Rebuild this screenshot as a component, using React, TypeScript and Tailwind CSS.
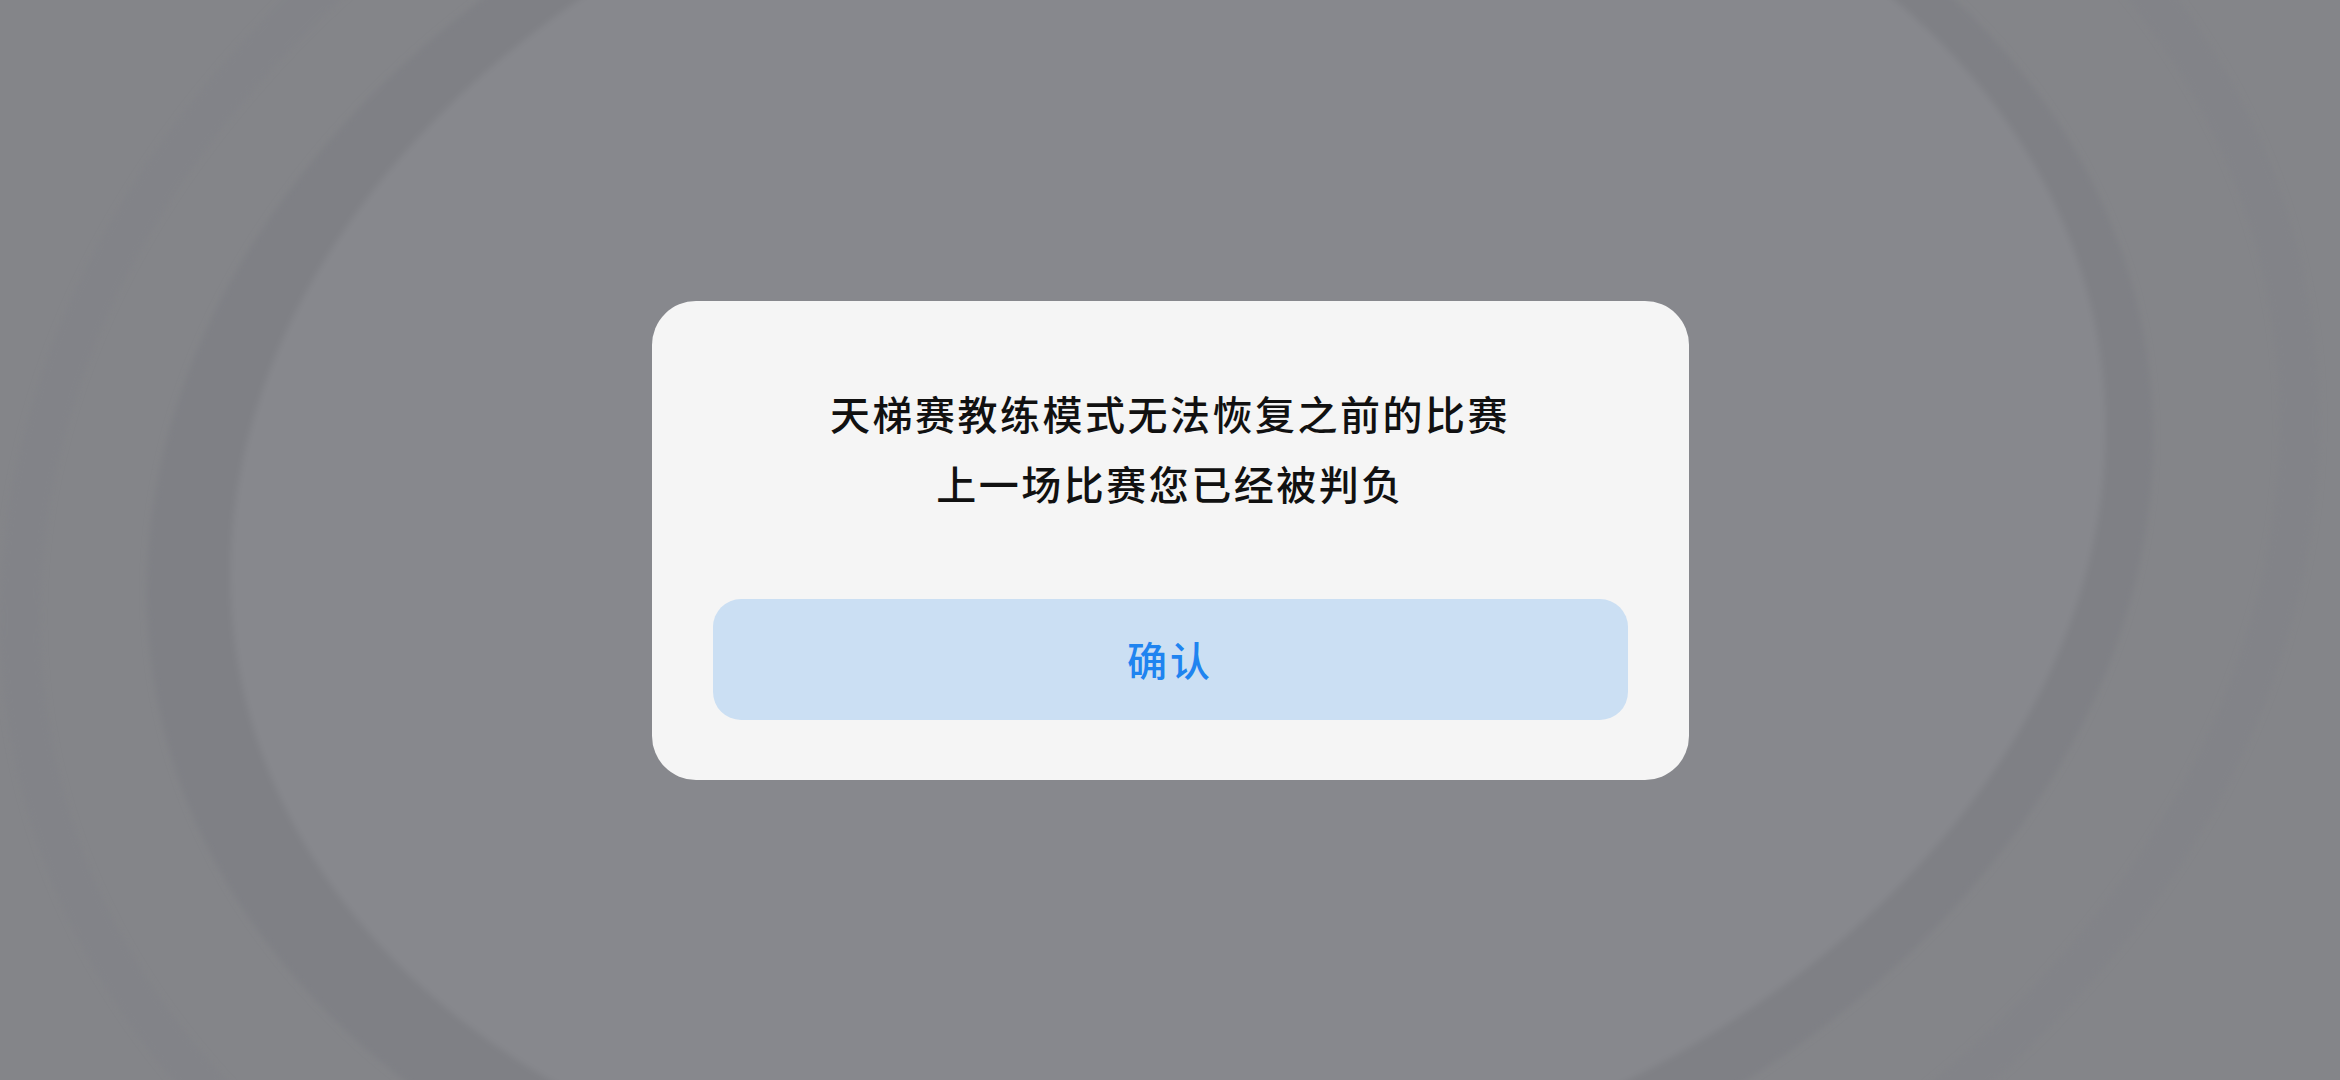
import React from "react";

export default function App() {
  return (
    <div
      className="relative w-[2340px] h-[1080px] overflow-hidden bg-[#848589] flex items-center justify-center"
      style={{ fontFamily: '"Noto Sans CJK SC", "Noto Sans", sans-serif' }}
    >
      <svg
        className="absolute inset-0 pointer-events-none"
        width="2340"
        height="1080"
        viewBox="0 0 2340 1080"
      >
        <defs>
          <filter id="blur" x="-20%" y="-20%" width="140%" height="140%">
            <feGaussianBlur stdDeviation="3" />
          </filter>
        </defs>
        <g filter="url(#blur)">
          <ellipse
            cx="1160"
            cy="520"
            rx="1150"
            ry="880"
            transform="rotate(-12 1160 520)"
            fill="none"
            stroke="#828388"
            strokeWidth="40"
          />
          <ellipse
            cx="1150"
            cy="515"
            rx="1010"
            ry="755"
            transform="rotate(-10 1150 515)"
            fill="#7f8085"
          />
          <ellipse
            cx="1168"
            cy="502"
            rx="944"
            ry="700"
            transform="rotate(-10 1168 502)"
            fill="#87888d"
          />
        </g>
      </svg>

      <div className="relative w-[1037px] rounded-[44px] bg-[#f5f5f5] pt-[77px] px-[61px] pb-[60px] flex flex-col items-center">
        <div className="text-[40px] leading-[70px] font-medium tracking-[2.5px] text-[#111111] text-center">
          <div>天梯赛教练模式无法恢复之前的比赛</div>
          <div>上一场比赛您已经被判负</div>
        </div>
        <button className="mt-[81px] w-full h-[121px] rounded-[28px] bg-[#cbdff3] text-[#1f84f0] text-[40px] tracking-[3px] font-medium flex items-center justify-center">
          确认
        </button>
      </div>
    </div>
  );
}
